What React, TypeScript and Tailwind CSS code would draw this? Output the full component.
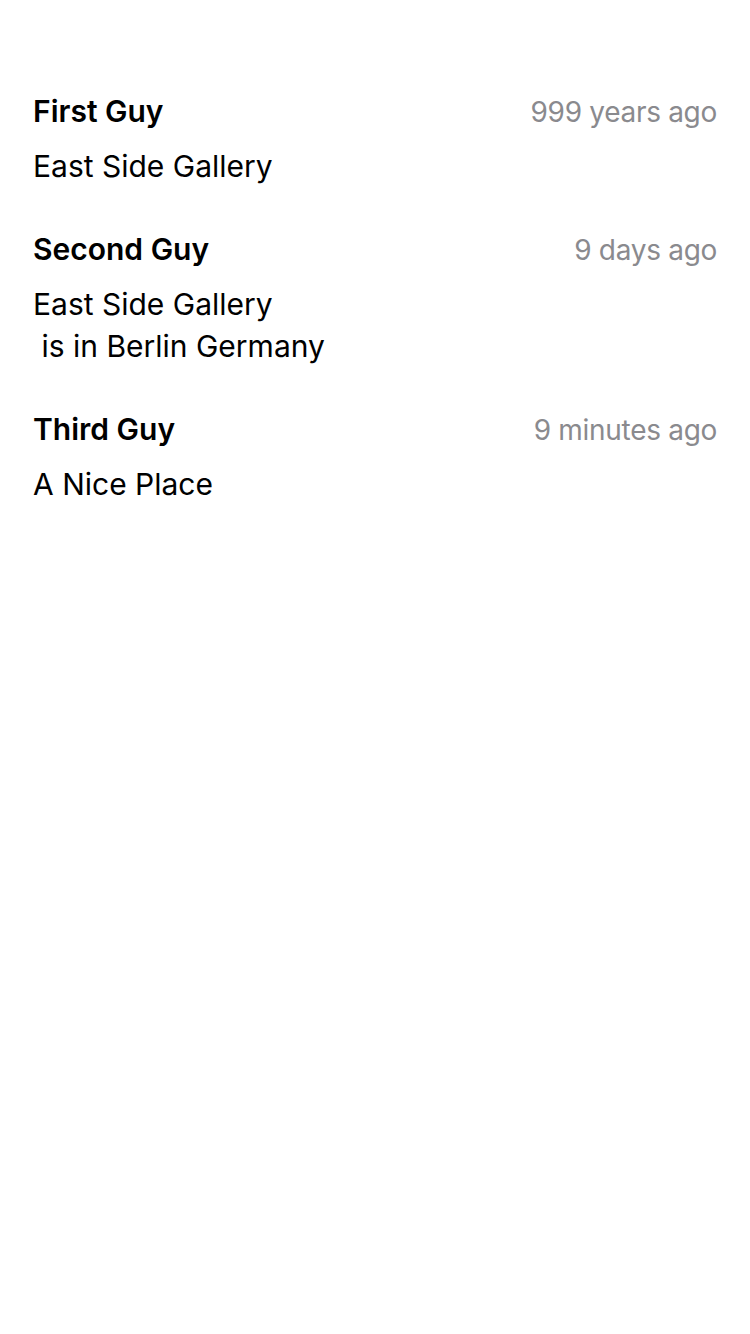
import React from "react";

const items = [
  { name: "First Guy", time: "999 years ago", body: "East Side Gallery" },
  { name: "Second Guy", time: "9 days ago", body: "East Side Gallery\n is in Berlin Germany" },
  { name: "Third Guy", time: "9 minutes ago", body: "A Nice Place" },
];

export default function App() {
  return (
    <div
      className="w-[750px] h-[1334px] bg-white px-[33px] pt-[93px] flex flex-col gap-[44px]"
      style={{ fontFamily: "Inter, 'Noto Sans', sans-serif" }}
    >
      {items.map((it) => (
        <div key={it.name} className="flex flex-col gap-[15px]">
          <div className="flex items-baseline justify-between">
            <span className="text-[30px] leading-[36px] font-semibold text-black">{it.name}</span>
            <span className="text-[28px] leading-[36px] text-[#8a8a8e] tracking-[-0.3px]">{it.time}</span>
          </div>
          <div className="text-[30px] leading-[42px] text-black whitespace-pre-wrap">{it.body}</div>
        </div>
      ))}
    </div>
  );
}
